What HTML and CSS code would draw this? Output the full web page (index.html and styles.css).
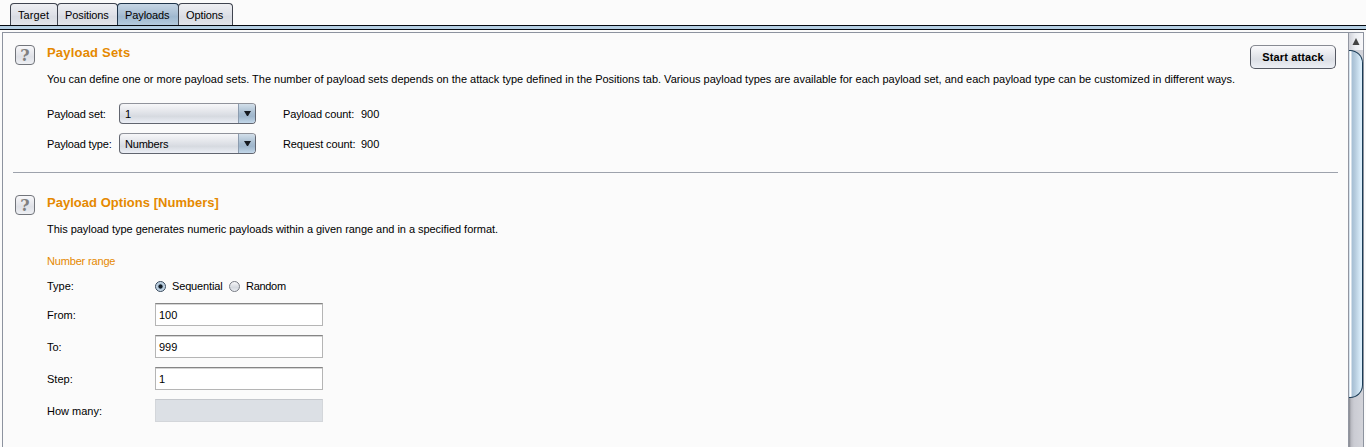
FILE: index.html
```html
<!DOCTYPE html>
<html lang="en">
<head>
<meta charset="utf-8">
<title>Payloads</title>
<link rel="stylesheet" href="styles.css">
</head>
<body>
<nav class="tabs">
  <div class="tab tab-target">Target</div>
  <div class="tab tab-positions">Positions</div>
  <div class="tab tab-payloads active">Payloads</div>
  <div class="tab tab-options">Options</div>
</nav>
<div class="band"></div>
<main class="panel">
  <div class="content">
    <section class="section sets">
      <div class="help">?</div>
      <div class="body">
        <h2 class="title"><span>Payload Sets</span></h2>
        <p class="desc desc-sets">You can define one or more payload sets. The number of payload sets depends on the attack type defined in the Positions tab. Various payload types are available for each payload set, and each payload type can be customized in different ways.</p>
        <div class="choices">
          <div class="choice">
            <span class="choice-label">Payload set:</span>
            <div class="select"><span>1</span><i class="arrow"><svg width="7" height="5" viewBox="0 0 7 5"><path d="M0 0H7L4 5H3Z" fill="#151a20"/></svg></i></div>
            <span class="count-label">Payload count:</span><span class="count">900</span>
          </div>
          <div class="choice">
            <span class="choice-label">Payload type:</span>
            <div class="select"><span>Numbers</span><i class="arrow"><svg width="7" height="5" viewBox="0 0 7 5"><path d="M0 0H7L4 5H3Z" fill="#151a20"/></svg></i></div>
            <span class="count-label">Request count:</span><span class="count">900</span>
          </div>
        </div>
      </div>
      <button class="start">Start attack</button>
    </section>
    <section class="section options">
      <div class="help">?</div>
      <div class="body">
        <h2 class="title title-options"><span>Payload Options [Numbers]</span></h2>
        <p class="desc desc-options">This payload type generates numeric payloads within a given range and in a specified format.</p>
        <h3 class="subtitle">Number range</h3>
        <div class="type-row">
          <span class="field-label">Type:</span>
          <span class="radio on"></span><span class="radio-label sequential">Sequential</span>
          <span class="radio"></span><span class="radio-label random">Random</span>
        </div>
        <div class="fields">
          <div class="field"><span class="field-label">From:</span><div class="input">100</div></div>
          <div class="field"><span class="field-label">To:</span><div class="input">999</div></div>
          <div class="field"><span class="field-label">Step:</span><div class="input">1</div></div>
          <div class="field"><span class="field-label">How many:</span><div class="input disabled"></div></div>
        </div>
      </div>
    </section>
  </div>
  <div class="scrollbar">
    <div class="scroll-up"><svg width="8" height="8" viewBox="0 0 8 8"><path d="M4 0L7.5 7H.5Z" fill="#444"/></svg></div>
    <div class="track"><div class="thumb"></div></div>
  </div>
</main>
</body>
</html>
```
FILE: styles.css
```css
* { box-sizing: border-box; }
body {
  margin: 0;
  height: 447px;
  overflow: hidden;
  display: flex;
  flex-direction: column;
  background: #fbfbfb;
  color: #000;
  font: 11px/16px "Liberation Sans", Arial, sans-serif;
  white-space: nowrap;
}
h2, h3, p { margin: 0; }
.tabs { display: flex; height: 25px; padding: 3px 0 0 10px; }
.tab {
  height: 22px;
  border: 1px solid #3f444f;
  border-bottom: 0;
  border-radius: 4px 4px 0 0;
  background: linear-gradient(#eeeff2, #dfe1e8 50%, #d9dce3 60%, #e2e4ea);
  padding-left: 7px;
  line-height: 23px;
  margin-right: -1px;
}
.tab-target { width: 48px; letter-spacing: .1px; }
.tab-positions { width: 61px; letter-spacing: -.1px; }
.tab-payloads { width: 62px; letter-spacing: -.1px; }
.tab-options { width: 55px; letter-spacing: -.1px; }
.tab.active {
  border-color: #1d3349;
  background: linear-gradient(#c5d5e4, #a9bfd4 48%, #9fb8cf 60%, #b4cadd);
}
.band {
  height: 5px;
  flex: none;
  border: solid #05090f;
  border-width: 1px 0;
  background: #b5cfe3;
}
.panel {
  flex: 1;
  display: flex;
  margin: 2px 2px 0;
  border: solid #8d939f;
  border-width: 1px 1px 0;
}
.content { flex: 1; min-width: 0; padding: 0 10px; }
.section { display: flex; align-items: flex-start; }
.sets { height: 140px; padding: 12px 0 0 2px; border-bottom: 1px solid #9da2ac; }
.options { padding: 22px 0 0 2px; }
.help {
  width: 20px;
  height: 20px;
  border: 1px solid #72757b;
  border-radius: 4px;
  background: linear-gradient(#f8f8fa, #dfe1e7 60%, #eef0f4);
  color: #808080;
  font: bold 16px/20px "DejaVu Serif", serif;
  text-align: center;
}
.body { width: 1215px; padding-left: 12px; flex: none; }
.title { color: #e58900; font-size: 13px; line-height: 16px; letter-spacing: .2px; }
.title-options { letter-spacing: .03px; }
.desc { margin-top: 10px; }
.desc-sets { letter-spacing: -.009px; }
.desc-options { letter-spacing: -.035px; }
.choices { margin-top: 16px; display: grid; row-gap: 9px; }
.choice { display: flex; align-items: center; height: 21px; }
.choice-label { width: 72px; letter-spacing: -.15px; }
.select {
  width: 137px;
  height: 21px;
  display: flex;
  justify-content: space-between;
  margin-right: 27px;
  padding-left: 5px;
  border: 1px solid #61656f;
  border-top-color: #90939b;
  border-radius: 4px;
  overflow: hidden;
  letter-spacing: -.2px;
  line-height: 20px;
  background: linear-gradient(#f7f7f9, #dcdfe5 55%, #d6dae0 65%, #eceff6);
}
.arrow {
  width: 17px;
  display: flex;
  justify-content: center;
  padding-top: 7px;
  border-left: 1px solid #8c9caf;
  background: linear-gradient(#d2dfea, #a5bbcf 50%, #9fb6cc 65%, #c3d8ea);
}
.count-label { width: 78px; letter-spacing: -.12px; }
.start {
  width: 86px;
  height: 24px;
  padding: 0;
  border: 1px solid #555963;
  border-top-color: #888b93;
  border-radius: 5px;
  background: linear-gradient(#fafafc, #dcdfe5 60%, #eceff5);
  font: bold 11px/22px "Liberation Sans", Arial, sans-serif;
  letter-spacing: .14px;
  color: #000;
}
.subtitle { margin-top: 16px; color: #e58900; font-size: 11px; font-weight: normal; line-height: 16px; letter-spacing: -.17px; }
.type-row { display: flex; align-items: center; height: 16px; margin-top: 9px; }
.field-label { width: 108px; flex: none; }
.radio {
  width: 11px;
  height: 11px;
  margin-right: 6px;
  border: 1px solid #777b84;
  border-radius: 50%;
  background: linear-gradient(#f8f8fa, #d5d9df 60%, #eceff4);
}
.radio.on {
  border-color: #34475b;
  background: radial-gradient(circle, #111b25 0 1.7px, #a9c0d4 2.5px, #d5e3ef 5px);
}
.sequential { width: 57px; letter-spacing: -.15px; }
.random { letter-spacing: -.3px; }
.fields { display: grid; row-gap: 9px; margin-top: 9px; }
.field { display: flex; height: 23px; align-items: center; }
.input {
  width: 168px;
  height: 23px;
  padding-left: 3px;
  border: 1px solid #b5b5b5;
  border-top-color: #858585;
  background: #fff;
  box-shadow: inset 0 1px #d5d5d5;
  line-height: 22px;
}
.input.disabled { border-color: #d3d6da; border-top-color: #c5c8cd; background: #dce0e5; box-shadow: none; }
.scrollbar {
  width: 15px;
  display: flex;
  flex-direction: column;
  border-left: 1px solid #9296a1;
}
.scroll-up {
  height: 17px;
  display: flex;
  justify-content: center;
  padding-top: 5px;
  background: linear-gradient(90deg, #d0d2d9, #eceef2 45%, #f8f8fa);
}
.track { flex: 1; background: linear-gradient(90deg, #83858c, #b9bac1 2px, #cbccd3 5px, #d3d4da); }
.thumb {
  width: 14px;
  height: 348px;
  border: 1px solid #193b55;
  border-left: 0;
  border-radius: 0 13px 13px 0;
  background: linear-gradient(90deg, #adc8de, #fff 1px 2px, #a7bfd4 3px, #b5cbdd 6px, #dceffc 12px);
}
```
